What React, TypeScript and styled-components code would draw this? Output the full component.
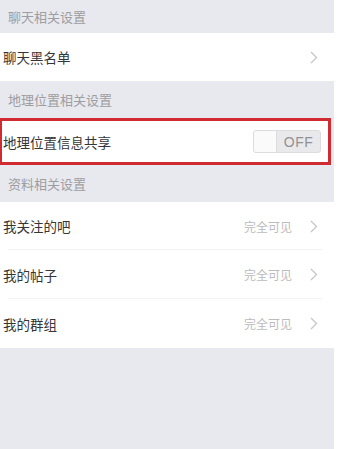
import React from "react";
import styled, { createGlobalStyle } from "styled-components";

const Global = createGlobalStyle`
  html, body {
    margin: 0;
    padding: 0;
    background: #ffffff;
  }
  body {
    font-family: "Noto Sans CJK SC", "Noto Sans", sans-serif;
  }
`;

const Page = styled.div`
  width: 334px;
  min-height: 449px;
  background: #e8e9ee;
  display: flex;
  flex-direction: column;
`;

const SectionHeader = styled.div<{ $h: number }>`
  height: ${(p) => p.$h}px;
  display: flex;
  align-items: center;
  padding-left: 8px;
  font-size: 13px;
  color: #9d9da2;
`;

const Group = styled.div`
  background: #ffffff;
  display: flex;
  flex-direction: column;
`;

const Row = styled.div<{ $h: number; $divider?: boolean }>`
  height: ${(p) => p.$h}px;
  box-sizing: border-box;
  display: flex;
  align-items: center;
  padding-left: 3px;
  padding-right: 16px;
  position: relative;
  ${(p) =>
    p.$divider
      ? `&::after {
    content: "";
    position: absolute;
    left: 8px;
    right: 12px;
    bottom: 0;
    height: 1px;
    background: #f3f3f5;
  }`
      : ""}
`;

const HighlightRow = styled.div`
  height: 47px;
  box-sizing: border-box;
  margin-right: 3px;
  background: #ffffff;
  border: 3px solid #cf2b30;
  border-left-width: 2px;
  display: flex;
  align-items: center;
  padding-left: 1px;
  padding-right: 7px;
`;

const Label = styled.span`
  flex: 1;
  font-size: 13.5px;
  color: #363636;
`;

const Value = styled.span`
  font-size: 12px;
  color: #bcbcc0;
  margin-right: 18px;
`;

const Toggle = styled.div`
  width: 66px;
  height: 21px;
  border: 1px solid #dcdcdf;
  border-radius: 3px;
  background: #e9e9ec;
  display: flex;
  overflow: hidden;
`;

const Thumb = styled.div`
  width: 22px;
  background: #fafafa;
  border-right: 1px solid #dcdcdf;
`;

const ToggleText = styled.span`
  flex: 1;
  display: flex;
  align-items: center;
  justify-content: center;
  font-family: "Liberation Sans", Arial, sans-serif;
  font-size: 14px;
  color: #919195;
  letter-spacing: 0.5px;
`;

const Chevron = () => (
  <svg width="8" height="13" viewBox="0 0 8 13" style={{ flexShrink: 0 }}>
    <path d="M1 1 L6.5 6.5 L1 12" fill="none" stroke="#c6c6ca" strokeWidth="1.3" />
  </svg>
);

export default function App() {
  return (
    <>
      <Global />
      <Page>
        <SectionHeader $h={33}>聊天相关设置</SectionHeader>
        <Group>
          <Row $h={48}>
            <Label>聊天黑名单</Label>
            <Chevron />
          </Row>
        </Group>
        <SectionHeader $h={37}>地理位置相关设置</SectionHeader>
        <HighlightRow>
          <Label>地理位置信息共享</Label>
          <Toggle>
            <Thumb />
            <ToggleText>OFF</ToggleText>
          </Toggle>
        </HighlightRow>
        <SectionHeader $h={37}>资料相关设置</SectionHeader>
        <Group>
          <Row $h={48} $divider>
            <Label>我关注的吧</Label>
            <Value>完全可见</Value>
            <Chevron />
          </Row>
          <Row $h={49} $divider>
            <Label>我的帖子</Label>
            <Value>完全可见</Value>
            <Chevron />
          </Row>
          <Row $h={49}>
            <Label>我的群组</Label>
            <Value>完全可见</Value>
            <Chevron />
          </Row>
        </Group>
      </Page>
    </>
  );
}
